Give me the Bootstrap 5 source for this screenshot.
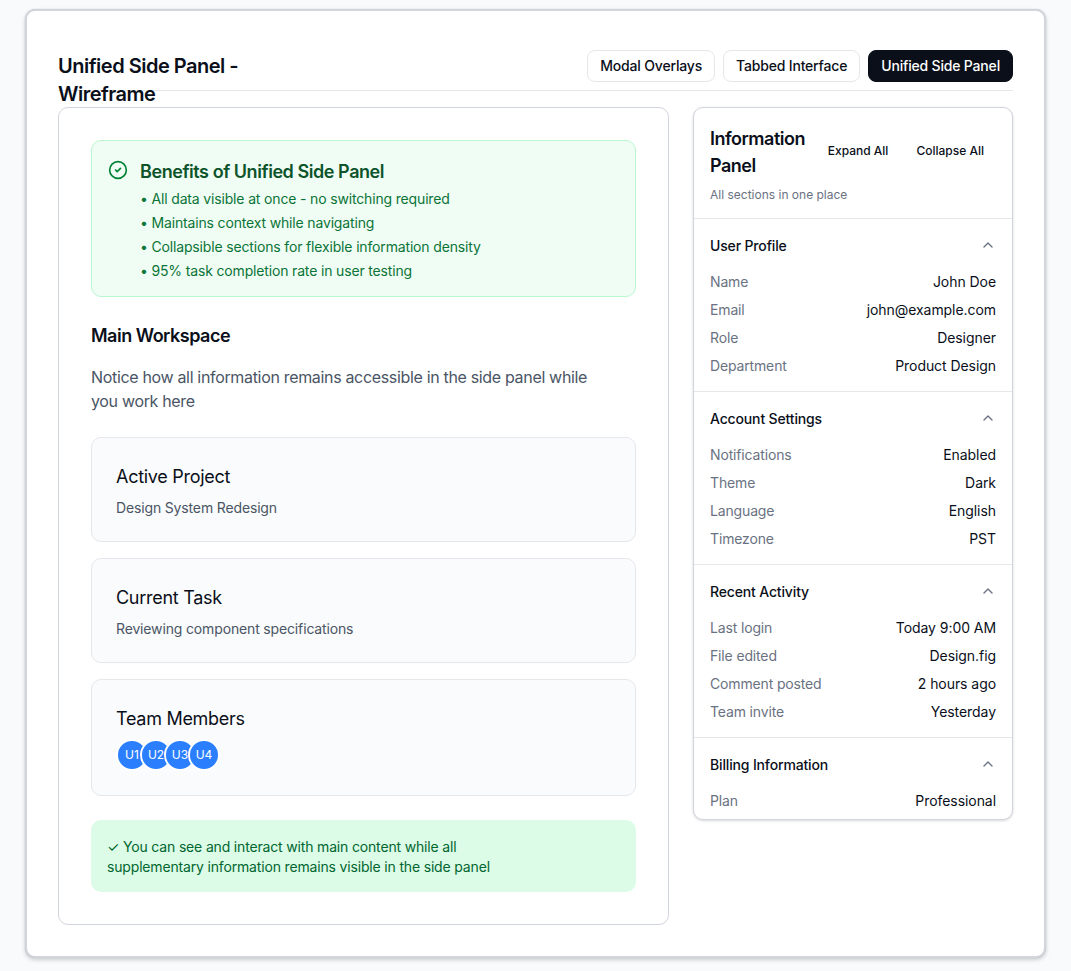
<!DOCTYPE html>
<html lang="en">
<head>
<meta charset="utf-8">
<title>Unified Side Panel - Wireframe</title>
<link href="https://cdn.jsdelivr.net/npm/bootstrap@5.3.0/dist/css/bootstrap.min.css" rel="stylesheet">
<style>
html,body{height:971px;overflow:hidden}
body{background:#f9fafc;font-family:Inter,"Liberation Sans",sans-serif;color:#0a0f1a;font-size:14px;padding:9px 25px 0}
.shell{width:1021px;height:949px;background:#fff;border:2px solid #d1d5dc;border-radius:10px;padding:39px 31px 0;box-shadow:0 2px 4px rgba(0,0,0,.18),0 0 1px rgba(0,0,0,.2)}
.topbar{height:41px;border-bottom:1px solid #e5e7eb}
.page-title{width:200px;margin:2px 0 0;font-size:20px;line-height:28px;font-weight:600;letter-spacing:-.5px;color:#0a0f1a}
.view-btn{height:32px;padding:0 12px;font-size:14px;font-weight:500;line-height:30px;letter-spacing:-.18px;border:1px solid #e5e7eb;border-radius:8px;background:#fff;color:#0a0f1a}
.view-btn.is-on{background:#0a0f1a;border-color:#0a0f1a;color:#fff}
.work{gap:24px;margin-top:16px;align-items:flex-start}
.main-pane{width:611px;height:818px;border:1px solid #d1d5dc;border-radius:10px;padding:32px}
.benefit{height:157px;background:#f0fdf4;border:1px solid #b9f8cf;border-radius:10px;padding:16px;gap:12px;color:#0b7438}
.benefit svg{margin-top:3px;flex:none}
.benefit h3{font-size:18px;line-height:28px;font-weight:600;letter-spacing:-.44px;color:#0d542b;margin:0 0 -1px;padding-top:1px}
.benefit ul{list-style:none;margin:0;padding:0;font-size:14px;line-height:20px;letter-spacing:-.16px}
.benefit li{margin-top:4px}
.work-title{font-size:18px;line-height:28px;font-weight:600;letter-spacing:-.5px;margin:25px 0 15px}
.work-text{max-width:510px;font-size:16px;line-height:24px;letter-spacing:-.33px;color:#4a5565;margin:0 0 24px}
.tile{height:105px;background:#fafbfc;border:1px solid #e5e7eb;border-radius:10px;padding:25px 24px 0;margin-bottom:16px}
.tile h4{font-size:18px;line-height:28px;font-weight:400;margin:0 0 7px;letter-spacing:-.28px}
.tile p{font-size:14px;line-height:20px;letter-spacing:-.15px;color:#4a5565;margin:0}
.tile-team{height:117px;margin-bottom:24px}
.tile-team h4{margin-bottom:6px}
.avatar{width:32px;height:32px;flex:none;border-radius:50%;background:#2b7fff;border:2px solid #fff;color:#fff;font-size:12px;line-height:28px;text-align:center;overflow:hidden;margin-right:-8px}
.note{height:72px;background:#dcfce7;border-radius:10px;padding:17px 16px 0;font-size:14px;line-height:20px;letter-spacing:-.167px;color:#016630}
.side{width:320px;height:713px;overflow:hidden;background:#fff;border:1px solid #d1d5dc;border-radius:10px;box-shadow:0 1px 3px rgba(0,0,0,.16)}
.side-head{height:111px;padding:17px 16px 0;border-bottom:1px solid #e5e7eb}
.side-title{width:108px;font-size:18px;line-height:27px;font-weight:600;letter-spacing:-.5px;margin:0}
.mini-btn{height:32px;padding:0 12px 2px;border:0;background:none;font-size:12px;font-weight:500;line-height:30px;white-space:nowrap;color:#0a0f1a}
.side-sub{font-size:12px;line-height:16px;color:#6a7282;margin:8px 0 0}
.sect{height:173px;padding:0 16px;border-bottom:1px solid #e5e7eb}
.sect:last-child{border-bottom:0}
.sect-head{height:53px;font-size:14px;font-weight:500;letter-spacing:-.15px;padding-bottom:1px}
.kv{height:28px;font-size:14px;line-height:20px}
.kv span:first-child{color:#6a7282;letter-spacing:-.15px}
.kv span:last-child{color:#0a0f1a;letter-spacing:-.06px}
</style>
</head>
<body>
<div class="shell">
  <div class="topbar d-flex justify-content-between align-items-start">
    <h1 class="page-title">Unified Side Panel - Wireframe</h1>
    <div class="d-flex gap-2">
      <button type="button" class="view-btn">Modal Overlays</button>
      <button type="button" class="view-btn">Tabbed Interface</button>
      <button type="button" class="view-btn is-on">Unified Side Panel</button>
    </div>
  </div>
  <div class="d-flex work">
    <main class="main-pane">
      <section class="benefit d-flex">
        <svg width="20" height="20" viewBox="0 0 24 24" fill="none" stroke="#008236" stroke-width="2" stroke-linecap="round" stroke-linejoin="round"><circle cx="12" cy="12" r="10"/><path d="m9 12 2 2 4-4"/></svg>
        <div>
          <h3>Benefits of Unified Side Panel</h3>
          <ul>
            <li>• All data visible at once - no switching required</li>
            <li>• Maintains context while navigating</li>
            <li>• Collapsible sections for flexible information density</li>
            <li>• 95% task completion rate in user testing</li>
          </ul>
        </div>
      </section>
      <h2 class="work-title">Main Workspace</h2>
      <p class="work-text">Notice how all information remains accessible in the side panel while you work here</p>
      <div class="tile"><h4>Active Project</h4><p>Design System Redesign</p></div>
      <div class="tile"><h4>Current Task</h4><p>Reviewing component specifications</p></div>
      <div class="tile tile-team">
        <h4>Team Members</h4>
        <div class="d-flex">
          <div class="avatar">U1</div><div class="avatar">U2</div><div class="avatar">U3</div><div class="avatar">U4</div>
        </div>
      </div>
      <div class="note">✓ You can see and interact with main content while all<br>supplementary information remains visible in the side panel</div>
    </main>
    <aside class="side">
      <div class="side-head">
        <div class="d-flex justify-content-between align-items-center">
          <h2 class="side-title">Information Panel</h2>
          <div class="d-flex gap-1">
            <button type="button" class="mini-btn">Expand All</button>
            <button type="button" class="mini-btn">Collapse All</button>
          </div>
        </div>
        <p class="side-sub">All sections in one place</p>
      </div>
      <section class="sect">
        <div class="sect-head d-flex justify-content-between align-items-center"><span>User Profile</span><svg width="16" height="16" viewBox="0 0 24 24" fill="none" stroke="#6a7282" stroke-width="2" stroke-linecap="round" stroke-linejoin="round"><path d="m18 15-6-6-6 6"/></svg></div>
        <div class="kv d-flex justify-content-between"><span>Name</span><span>John Doe</span></div>
        <div class="kv d-flex justify-content-between"><span>Email</span><span>john@example.com</span></div>
        <div class="kv d-flex justify-content-between"><span>Role</span><span>Designer</span></div>
        <div class="kv d-flex justify-content-between"><span>Department</span><span>Product Design</span></div>
      </section>
      <section class="sect">
        <div class="sect-head d-flex justify-content-between align-items-center"><span>Account Settings</span><svg width="16" height="16" viewBox="0 0 24 24" fill="none" stroke="#6a7282" stroke-width="2" stroke-linecap="round" stroke-linejoin="round"><path d="m18 15-6-6-6 6"/></svg></div>
        <div class="kv d-flex justify-content-between"><span>Notifications</span><span>Enabled</span></div>
        <div class="kv d-flex justify-content-between"><span>Theme</span><span>Dark</span></div>
        <div class="kv d-flex justify-content-between"><span>Language</span><span>English</span></div>
        <div class="kv d-flex justify-content-between"><span>Timezone</span><span>PST</span></div>
      </section>
      <section class="sect">
        <div class="sect-head d-flex justify-content-between align-items-center"><span>Recent Activity</span><svg width="16" height="16" viewBox="0 0 24 24" fill="none" stroke="#6a7282" stroke-width="2" stroke-linecap="round" stroke-linejoin="round"><path d="m18 15-6-6-6 6"/></svg></div>
        <div class="kv d-flex justify-content-between"><span>Last login</span><span>Today 9:00 AM</span></div>
        <div class="kv d-flex justify-content-between"><span>File edited</span><span>Design.fig</span></div>
        <div class="kv d-flex justify-content-between"><span>Comment posted</span><span>2 hours ago</span></div>
        <div class="kv d-flex justify-content-between"><span>Team invite</span><span>Yesterday</span></div>
      </section>
      <section class="sect">
        <div class="sect-head d-flex justify-content-between align-items-center"><span>Billing Information</span><svg width="16" height="16" viewBox="0 0 24 24" fill="none" stroke="#6a7282" stroke-width="2" stroke-linecap="round" stroke-linejoin="round"><path d="m18 15-6-6-6 6"/></svg></div>
        <div class="kv d-flex justify-content-between"><span>Plan</span><span>Professional</span></div>
      </section>
    </aside>
  </div>
</div>
<script src="https://cdn.jsdelivr.net/npm/bootstrap@5.3.0/dist/js/bootstrap.bundle.min.js"></script>
</body>
</html>
